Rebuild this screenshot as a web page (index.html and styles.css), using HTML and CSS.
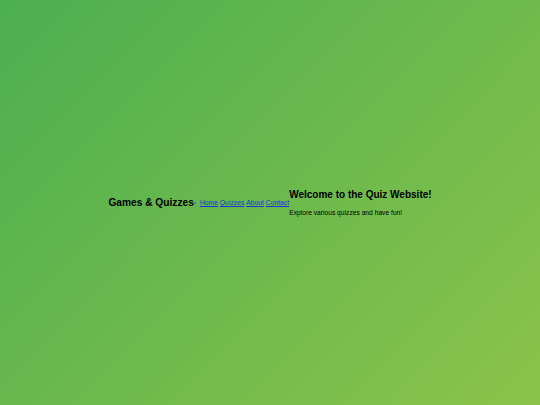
FILE: index.html
```html
<!DOCTYPE html>
<html lang="en">
<head>
<meta charset="utf-8">
<title>Games &amp; Quizzes</title>
<link rel="stylesheet" href="styles.css">
</head>
<body>
<header class="site-header">
  <h1 class="site-title">Games &amp; Quizzes</h1>
  <nav class="site-nav">
    <span class="nav-dot"></span>
    <ul class="nav-list">
      <li><a href="#">Home</a></li>
      <li><a href="#">Quizzes</a></li>
      <li><a href="#">About</a></li>
      <li><a href="#">Contact</a></li>
    </ul>
  </nav>
</header>
<main class="intro">
  <h2 class="intro-title">Welcome to the Quiz Website!</h2>
  <p class="intro-text">Explore various quizzes and have fun!</p>
</main>
</body>
</html>
```
FILE: styles.css
```css
html, body {
  margin: 0;
  padding: 0;
}
body {
  height: 100vh;
  display: flex;
  justify-content: center;
  align-items: center;
  background: linear-gradient(135deg, #4caf50, #8bc34a);
  font-family: "Liberation Sans", Arial, sans-serif;
  color: #000;
}
.site-header {
  display: flex;
  align-items: center;
}
.site-title {
  font-size: 10.2px;
  font-weight: bold;
  margin: 0;
}
.site-nav {
  display: flex;
  align-items: center;
}
.nav-dot {
  width: 2px;
  height: 2px;
  border-radius: 50%;
  background: #3b6cb8;
  margin: 1px 4px 0 0;
}
.nav-list {
  display: flex;
  list-style: none;
  margin: 0;
  padding: 0;
  gap: 1.8px;
  font-size: 6.8px;
}
.nav-list a {
  color: #1a32d8;
}
.intro {
  display: flex;
  flex-direction: column;
}
.intro-title {
  font-size: 10px;
  font-weight: bold;
  margin: 0 0 9px;
}
.intro-text {
  font-size: 6.7px;
  margin: 0;
}
```
